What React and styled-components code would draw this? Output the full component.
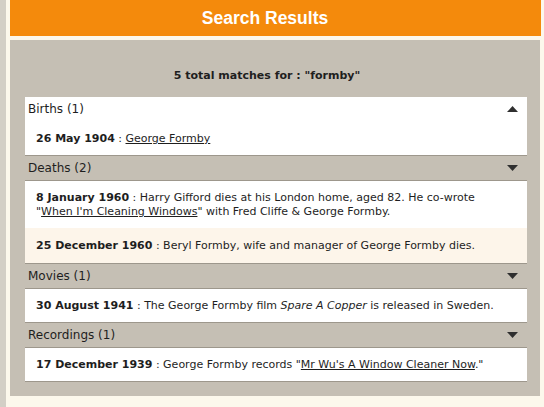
import React from "react";
import styled, { createGlobalStyle } from "styled-components";

const GlobalStyle = createGlobalStyle`
  html, body { margin: 0; padding: 0; background: #fcf8ec; }
  body { font-family: "DejaVu Sans", Verdana, sans-serif; font-size: 11px; color: #1e1e1e; }
`;

const Page = styled.div`
  display: flex;
  min-height: 407px;
`;

const Frame = styled.div`
  width: 6px;
  flex-shrink: 0;
  background: #d3cfc6;
`;

const Main = styled.div`
  flex: 1;
  display: flex;
  flex-direction: column;
  padding-left: 4px;
`;

const Banner = styled.div`
  height: 36px;
  margin-right: 3px;
  background: #f48a0c;
  color: #fff;
  font-family: "Liberation Sans", Arial, sans-serif;
  font-weight: bold;
  font-size: 17.5px;
  display: flex;
  align-items: center;
  justify-content: center;
  padding-right: 21px;
`;

const Panel = styled.div`
  margin-top: 4px;
  margin-right: 4px;
  background: #c5bfb4;
  padding: 29px 13px 14px 15px;
  display: flex;
  flex-direction: column;
`;

const Summary = styled.div`
  font-weight: bold;
  font-size: 11px;
  line-height: 14px;
  text-align: center;
  padding-right: 18px;
  margin-bottom: 14px;
`;

const Section = styled.div`
  display: flex;
  flex-direction: column;
`;

const Header = styled.div`
  height: 24px;
  display: flex;
  align-items: center;
  justify-content: space-between;
  padding: 0 9px 0 3px;
  font-size: 12px;
  background: ${(p) => (p.$open ? "#ffffff" : "#c5bfb4")};
  border-bottom: 1px solid ${(p) => (p.$open ? "#ffffff" : "#9d978c")};
`;

const Items = styled.div`
  display: flex;
  flex-direction: column;
  border-bottom: 1px solid #9d978c;
`;

const Item = styled.div`
  padding: ${(p) => (p.$alt ? "11px 27px 10px 11px" : "10px 27px 9px 11px")};
  line-height: 14px;
  background: ${(p) => (p.$alt ? "#fdf5ea" : "#ffffff")};
`;

const Date = styled.b`
  font-weight: bold;
`;

const Link = styled.a`
  color: inherit;
  text-decoration: underline;
`;

const Arrow = ({ up }) => (
  <svg width="11" height="6" viewBox="0 0 11 6">
    <polygon points={up ? "5.5,0 11,6 0,6" : "0,0 11,0 5.5,6"} fill="#2f2f2f" />
  </svg>
);

const sections = [
  {
    title: "Births (1)",
    open: true,
    items: [
      <>
        <Date>26 May 1904</Date> : <Link>George Formby</Link>
      </>,
    ],
  },
  {
    title: "Deaths (2)",
    items: [
      <>
        <Date>8 January 1960</Date> : Harry Gifford dies at his London home, aged 82. He co-wrote "
        <Link>When I'm Cleaning Windows</Link>" with Fred Cliffe &amp; George Formby.
      </>,
      <>
        <Date>25 December 1960</Date> : Beryl Formby, wife and manager of George Formby dies.
      </>,
    ],
  },
  {
    title: "Movies (1)",
    items: [
      <>
        <Date>30 August 1941</Date> : The George Formby film <i>Spare A Copper</i> is released in Sweden.
      </>,
    ],
  },
  {
    title: "Recordings (1)",
    items: [
      <>
        <Date>17 December 1939</Date> : George Formby records "<Link>Mr Wu's A Window Cleaner Now</Link>."
      </>,
    ],
  },
];

export default function App() {
  return (
    <>
      <GlobalStyle />
      <Page>
        <Frame />
        <Main>
          <Banner>Search Results</Banner>
          <Panel>
            <Summary>5 total matches for : "formby"</Summary>
            {sections.map((s) => (
              <Section key={s.title}>
                <Header $open={s.open}>
                  <span>{s.title}</span>
                  <Arrow up={s.open} />
                </Header>
                <Items>
                  {s.items.map((it, i) => (
                    <Item key={i} $alt={i % 2 === 1}>
                      {it}
                    </Item>
                  ))}
                </Items>
              </Section>
            ))}
          </Panel>
        </Main>
      </Page>
    </>
  );
}
